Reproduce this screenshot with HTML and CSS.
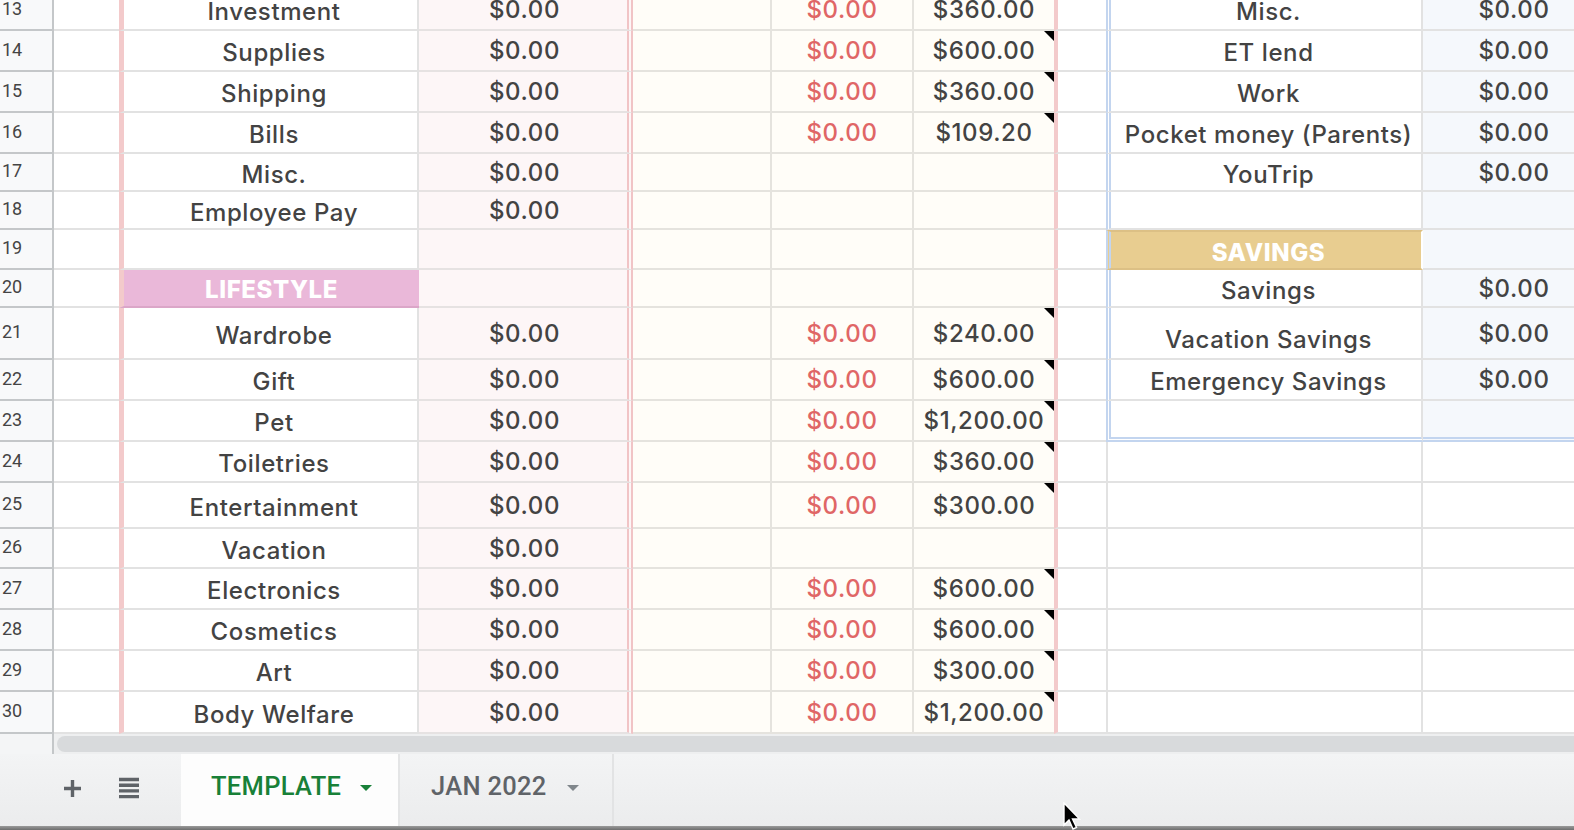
FILE: index.html
```html
<!DOCTYPE html>
<html lang="en">
<head>
    <meta charset="UTF-8">
    <meta name="viewport" content="width=device-width, initial-scale=1.0">
    <title>Budget Planner - TEMPLATE</title>
    <link rel="stylesheet" href="styles.css">
</head>
<body>
    <div class="sheet-wrap">
        <div class="sheet" id="sheet"></div>
    </div>

    <div class="hbar">
        <div class="hbar-corner"></div>
        <div class="hbar-track"><div class="hbar-thumb"></div></div>
    </div>

    <div class="tabbar">
        <div class="tab-tools">
            <button class="tool" title="Add sheet">
                <svg width="19" height="19" viewBox="0 0 19 19"><path d="M9.5 1v17M1 9.5h17" stroke="#5f6368" stroke-width="3.4"/></svg>
            </button>
            <button class="tool" title="All sheets">
                <svg width="22" height="22" viewBox="0 0 22 22"><path d="M1 2.5h20M1 8.2h20M1 13.9h20M1 19.6h20" stroke="#5f6368" stroke-width="3.4"/></svg>
            </button>
        </div>
        <div class="tab active">
            <span>TEMPLATE</span>
            <span class="caret"></span>
        </div>
        <div class="tab">
            <span>JAN 2022</span>
            <span class="caret"></span>
        </div>
        <div class="tab-rest"></div>
    </div>
    <div class="frame-edge"></div>

    <svg class="cursor" width="20" height="30" viewBox="0 0 20 30">
        <path d="M1 1v22l5-5 4 9 3.5-1.5-4-8.5h7z" fill="#000" stroke="#fff" stroke-width="1.4"/>
    </svg>

    <script>
        // rows 13-30 of the monthly budget tab
        const rows = [
            { n: 13, l: 'Investment', a: '$0.00', r: '$0.00', p: '$360.00', note: true, rl: 'Misc.', rv: '$0.00', box: true },
            { n: 14, l: 'Supplies', a: '$0.00', r: '$0.00', p: '$600.00', note: true, rl: 'ET lend', rv: '$0.00', box: true },
            { n: 15, l: 'Shipping', a: '$0.00', r: '$0.00', p: '$360.00', note: true, rl: 'Work', rv: '$0.00', box: true },
            { n: 16, l: 'Bills', a: '$0.00', r: '$0.00', p: '$109.20', note: true, rl: 'Pocket money (Parents)', rv: '$0.00', box: true },
            { n: 17, l: 'Misc.', a: '$0.00', rl: 'YouTrip', rv: '$0.00', box: true },
            { n: 18, l: 'Employee Pay', a: '$0.00', box: true },
            { n: 19, box: true, rhead: 'SAVINGS' },
            { n: 20, lhead: 'LIFESTYLE', rl: 'Savings', rv: '$0.00', box: true },
            { n: 21, l: 'Wardrobe', a: '$0.00', r: '$0.00', p: '$240.00', note: true, rl: 'Vacation Savings', rv: '$0.00', box: true, low: true },
            { n: 22, l: 'Gift', a: '$0.00', r: '$0.00', p: '$600.00', note: true, rl: 'Emergency Savings', rv: '$0.00', box: true },
            { n: 23, l: 'Pet', a: '$0.00', r: '$0.00', p: '$1,200.00', note: true, box: true, boxEnd: true },
            { n: 24, l: 'Toiletries', a: '$0.00', r: '$0.00', p: '$360.00', note: true },
            { n: 25, l: 'Entertainment', a: '$0.00', r: '$0.00', p: '$300.00', note: true },
            { n: 26, l: 'Vacation', a: '$0.00' },
            { n: 27, l: 'Electronics', a: '$0.00', r: '$0.00', p: '$600.00', note: true },
            { n: 28, l: 'Cosmetics', a: '$0.00', r: '$0.00', p: '$600.00', note: true },
            { n: 29, l: 'Art', a: '$0.00', r: '$0.00', p: '$300.00', note: true },
            { n: 30, l: 'Body Welfare', a: '$0.00', r: '$0.00', p: '$1,200.00', note: true }
        ];

        const sheet = document.getElementById('sheet');

        function cell(cls, text) {
            const div = document.createElement('div');
            div.className = 'cell ' + cls;
            if (text) div.textContent = text;
            sheet.appendChild(div);
            return div;
        }

        rows.forEach(row => {
            cell('num', row.n);
            cell('blank');
            if (row.lhead) cell('lbl head-pink', row.lhead);
            else cell('lbl', row.l);
            cell('amt', row.a);
            cell('cream');
            cell('cream rem', row.r);
            cell('cream plan' + (row.note ? ' note' : ''), row.p);
            cell('gap');

            let extra = row.box ? ' box' : '';
            if (row.boxEnd) extra += ' box-end';
            if (row.rhead) cell('rlbl head-gold' + extra, row.rhead);
            else cell('rlbl' + extra + (row.low ? ' low' : ''), row.rl);
            cell('rval' + extra, row.rv);
        });
    </script>
</body>
</html>
```

FILE: styles.css
```css
body {
    margin: 0;
    width: 1574px;
    height: 830px;
    overflow: hidden;
    background: #fff;
    font-family: Inter, "Open Sans", sans-serif;
    position: relative;
}

/* grid */
.sheet-wrap {
    height: 734px;
    overflow: hidden;
}
.sheet {
    margin-top: -10px;
    display: grid;
    grid-template-columns: 54px 65px 300px 214px 139px 142px 140px 52px 317px 182px;
    grid-template-rows: 41px 41px 41px 41px 38px 38px 40px 38px 52px 41px 41px 41px 46px 40px 41px 41px 41px 42px;
}
.cell {
    box-sizing: border-box;
    border-bottom: 2px solid #e2e2e2;
    display: flex;
    align-items: center;
    justify-content: center;
    font-size: 24px;
    letter-spacing: 0.6px;
    font-weight: 500;
    color: #434343;
    white-space: nowrap;
    position: relative;
}
.num {
    background: #f8f9fa;
    border-right: 2px solid #c4c7c9;
    border-bottom-color: #c4c7c9;
    justify-content: flex-start;
    padding: 0 0 3px 2px;
    font-family: Roboto, "Liberation Sans", sans-serif;
    font-size: 18px;
    letter-spacing: 0;
    font-weight: 400;
    color: #444;
}
.lbl {
    border-left: 5px solid #f3cacb;
    border-right: 2px solid #e2e2e2;
    padding: 4px 0 0 7px;
}
.amt {
    background: #fdf6f7;
    border-right: 6px double #f1c4c6;
    border-bottom-color: #e6e2e2;
    padding-left: 3px;
}
.cream {
    background: #fffdf8;
    border-right: 2px solid #e5e3de;
    border-bottom-color: #e5e3de;
}
.cream.plan { border-right: none; }
.rem { color: #e06666; }
.note::after {
    content: "";
    position: absolute;
    top: 0;
    right: 0;
    border-top: 10px solid #000;
    border-left: 10px solid transparent;
}
.gap { border-left: 4px solid #f3cacb; }

.head-pink,
.head-gold {
    color: #fff;
    font-weight: 800;
    padding-top: 2px;
}
.head-pink {
    background: #eab8d9;
    border-bottom-color: #dba6c8;
    border-right: none;
    padding-left: 0;
}

/* right-hand income / savings table */
.rlbl {
    border-left: 2px solid #e2e2e2;
    border-right: 2px solid #e2e2e2;
    padding: 4px 0 0 5px;
}
.rlbl.box { border-left: 5px double #c3d5ef; }
.rlbl.low {
    align-items: flex-end;
    padding: 0 0 4px 5px;
}
.rval.box { background: #f5f8fc; }
.box-end { border-bottom: 5px double #c3d5ef; }
.head-gold {
    background: #e8cd90;
    border-top: 2px solid #dcc085;
    border-bottom: 2px solid #dcc085;
    border-right-color: #fff;
}

/* horizontal scrollbar */
.hbar {
    height: 20px;
    display: flex;
}
.hbar-corner {
    width: 54px;
    background: #f4f5f6;
    border-right: 2px solid #c4c7c9;
    box-sizing: border-box;
}
.hbar-track {
    flex: 1;
    background: #eeeff0;
    padding: 2px 0 0 3px;
}
.hbar-thumb {
    height: 16px;
    background: #d8dadc;
    border-radius: 8px 0 0 8px;
}

/* sheet tabs */
.tabbar {
    height: 72px;
    display: flex;
    background: linear-gradient(#f3f4f5, #ebeced);
    font-family: Roboto, "Liberation Sans", sans-serif;
    font-weight: 500;
    font-size: 25.5px;
    letter-spacing: 0.3px;
}
.tab-tools {
    width: 181px;
    display: flex;
    align-items: center;
    padding: 0 0 4px 63px;
    gap: 36px;
    box-sizing: border-box;
}
.tool {
    border: none;
    background: none;
    padding: 0;
    display: flex;
}
.tab {
    width: 214px;
    display: flex;
    align-items: center;
    padding: 0 0 8px 31px;
    gap: 20px;
    box-sizing: border-box;
    color: #5f6368;
    border-right: 2px solid #e2e3e4;
}
.tab.active {
    background: #fdfdfd;
    color: #188038;
    width: 219px;
    padding-left: 30px;
    gap: 19px;
    border-right: 2px solid #e4e5e6;
}
.caret {
    width: 0;
    height: 0;
    border-left: 6.5px solid transparent;
    border-right: 6.5px solid transparent;
    border-top: 6.5px solid #80868b;
    margin-top: 3px;
}
.tab.active .caret { border-top-color: #188038; }
.tab-rest { flex: 1; }

.frame-edge {
    height: 4px;
    background: linear-gradient(#9a9a9a, #6e6e6e);
}

.cursor {
    position: absolute;
    left: 1063px;
    top: 802px;
}
```
